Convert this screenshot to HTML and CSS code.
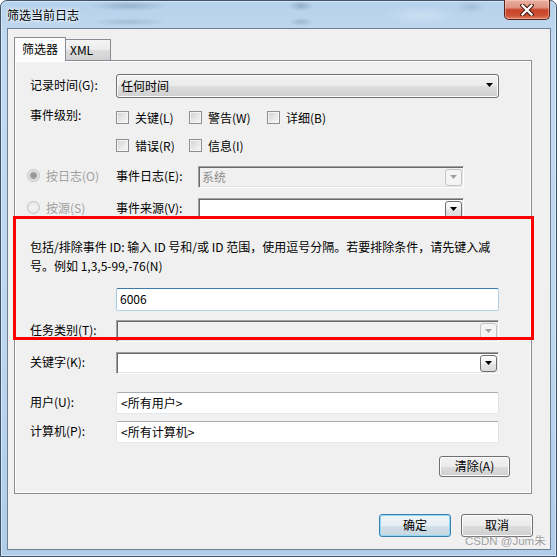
FILE: index.html
```html
<!DOCTYPE html>
<html lang="zh-CN">
<head>
<meta charset="utf-8">
<title>筛选当前日志</title>
<link rel="stylesheet" href="styles.css">
</head>
<body>
<div class="window">
  <div class="titlebar">
    <span class="title">筛选当前日志</span>
    <div class="close-btn">
      <svg width="14" height="12" viewBox="0 0 14 12"><path d="M2.5 1.5 L11.5 10.5 M11.5 1.5 L2.5 10.5" stroke="#4d1c12" stroke-width="4.4" stroke-linecap="square"/><path d="M2.5 1.5 L11.5 10.5 M11.5 1.5 L2.5 10.5" stroke="#ffffff" stroke-width="2.2" stroke-linecap="square"/></svg>
    </div>
  </div>
  <div class="client">
    <div class="tabs">
      <div class="tab tab-active">筛选器</div>
      <div class="tab">XML</div>
    </div>
    <div class="panel">
      <div class="field field-time">
        <span class="label">记录时间(G):</span>
        <div class="dropdown"><span>任何时间</span><svg class="tri" width="7" height="4" viewBox="0 0 7 4"><path d="M0 0h7L3.5 4z"/></svg></div>
      </div>
      <div class="field field-levels">
        <span class="label">事件级别:</span>
        <div class="checks">
          <span class="check"><span class="box"></span>关键(L)</span>
          <span class="check"><span class="box"></span>警告(W)</span>
          <span class="check"><span class="box"></span>详细(B)</span>
          <span class="check"><span class="box"></span>错误(R)</span>
          <span class="check"><span class="box"></span>信息(I)</span>
        </div>
      </div>
      <div class="source-row source-log">
        <span class="radio"><span class="dot dot-on"></span>按日志(O)</span>
        <span class="label">事件日志(E):</span>
        <div class="combo combo-off"><span>系统</span><span class="drop-btn"><svg class="tri" width="7" height="4" viewBox="0 0 7 4"><path d="M0 0h7L3.5 4z"/></svg></span></div>
      </div>
      <div class="source-row source-src">
        <span class="radio"><span class="dot"></span>按源(S)</span>
        <span class="label">事件来源(V):</span>
        <div class="combo"><span></span><span class="drop-btn"><svg class="tri" width="7" height="4" viewBox="0 0 7 4"><path d="M0 0h7L3.5 4z"/></svg></span></div>
      </div>
      <p class="desc">包括/排除事件 ID: 输入 ID 号和/或 ID 范围，使用逗号分隔。若要排除条件，请先键入减<br>号。例如 1,3,5-99,-76(N)</p>
      <div class="field field-id">
        <span class="label"></span>
        <div class="textbox textbox-focus">6006</div>
      </div>
      <div class="field field-task">
        <span class="label">任务类别(T):</span>
        <div class="combo combo-off"><span></span><span class="drop-btn"><svg class="tri" width="7" height="4" viewBox="0 0 7 4"><path d="M0 0h7L3.5 4z"/></svg></span></div>
      </div>
      <div class="field field-keyword">
        <span class="label">关键字(K):</span>
        <div class="combo"><span></span><span class="drop-btn"><svg class="tri" width="7" height="4" viewBox="0 0 7 4"><path d="M0 0h7L3.5 4z"/></svg></span></div>
      </div>
      <div class="field field-user">
        <span class="label">用户(U):</span>
        <div class="textbox">&lt;所有用户&gt;</div>
      </div>
      <div class="field field-computer">
        <span class="label">计算机(P):</span>
        <div class="textbox">&lt;所有计算机&gt;</div>
      </div>
      <div class="clear-row"><button class="btn btn-clear">清除(A)</button></div>
    </div>
    <div class="footer">
      <button class="btn btn-default">确定</button>
      <button class="btn">取消</button>
    </div>
  </div>
  <div class="annotation"></div>
  <div class="watermark">CSDN @Jum朱</div>
</div>
</body>
</html>
```
FILE: styles.css
```css
* { box-sizing: border-box; }
html, body { margin: 0; padding: 0; }
body {
  width: 557px; height: 557px; overflow: hidden; background: #fff;
  font-family: "Noto Sans CJK SC", "Noto Sans", sans-serif;
  font-size: 12px; line-height: 17px; color: #000;
}
.window {
  position: relative; width: 557px; height: 557px;
  display: flex; flex-direction: column;
  border: 1px solid #3f536b; border-radius: 7px 7px 0 0;
  background: linear-gradient(180deg, #b6d1eb 0%, #c2daf1 8%, #bdd7f0 60%, #b0cce8 100%);
  box-shadow: inset 0 0 0 1px rgba(255,255,255,.45);
}
.titlebar {
  flex: none; height: 27px;
  display: flex; justify-content: space-between; align-items: flex-start;
  border-radius: 6px 6px 0 0;
  background:
    radial-gradient(ellipse 38px 5px at 128px 5px, rgba(85,105,130,.30), transparent),
    radial-gradient(ellipse 38px 4px at 128px 21px, rgba(85,105,130,.22), transparent),
    radial-gradient(ellipse 12px 5px at 300px 5px, rgba(85,105,130,.35), transparent),
    radial-gradient(ellipse 12px 4px at 300px 21px, rgba(85,105,130,.28), transparent),
    radial-gradient(ellipse 14px 6px at 470px 6px, rgba(85,105,130,.18), transparent),
    radial-gradient(ellipse 40px 10px at 420px 14px, rgba(255,255,255,.25), transparent);
}
.title {
  padding: 5px 0 0 6px;
  text-shadow: 0 0 5px #fff, 0 0 3px #fff;
}
.close-btn {
  width: 46px; height: 20px; margin: -1px 6px 0 0;
  display: flex; align-items: center; justify-content: center;
  border: 1px solid #5a2016; border-top: none; border-radius: 0 0 5px 5px;
  background: linear-gradient(180deg, #eab0a2 0%, #df9281 40%, #c8452c 52%, #cc4f34 80%, #e0805c 100%);
  box-shadow: inset 0 0 0 1px rgba(255,220,210,.45);
}
.client {
  flex: none; height: 522px; margin: 0 5px 0 6px;
  border: 1px solid #6f7f92; background: #f0f0f0;
  padding: 8px 0 0 6px;
  display: flex; flex-direction: column;
}
.tabs {
  flex: none; height: 23px;
  display: flex; align-items: flex-end;
  position: relative; z-index: 1;
}
.tab {
  height: 21px; width: 45px;
  border: 1px solid #898c95; border-left: none; border-bottom: none;
  padding: 1px 0 0 4px;
  background: linear-gradient(180deg, #f4f4f4 0%, #ebebeb 50%, #dddddd 51%, #d2d2d2 100%);
}
.tab-active {
  height: 24px; width: 52px; margin-bottom: -1px;
  border-left: 1px solid #898c95;
  padding: 2px 0 0 0; text-align: center;
  background: #fcfcfc;
}
.panel {
  flex: none; width: 518px; height: 434px;
  border: 1px solid #898c95;
  box-shadow: inset 1px 1px 0 #fff, inset -1px -1px 0 #fff;
  background: #f0f0f0;
  padding: 13px 0 0 15px;
}
.field {
  display: grid; grid-template-columns: 86px 383px; align-items: center;
}
.label { margin-bottom: 4px; }
.field-time { height: 24px; }
.field-levels { margin-top: 11px; align-items: start; }
.field-levels .label { margin-top: -3px; margin-bottom: 0; }
.field-id { margin-top: 13px; }
.field-task { margin-top: 9px; }
.field-keyword { margin-top: 10px; }
.field-user { margin-top: 18px; }
.field-computer { margin-top: 7px; }

.dropdown {
  height: 24px; border: 1px solid #707070; border-radius: 3px;
  display: flex; align-items: center; justify-content: space-between;
  padding: 0 5px 2px 4px;
  background: linear-gradient(180deg, #f3f3f3 0%, #ebebeb 48%, #dddddd 52%, #cfcfcf 100%);
  box-shadow: inset 0 0 0 1px #fbfbfb;
}
.tri { display: block; fill: #000; }

.checks {
  display: grid; grid-template-columns: 73px 78px auto;
  grid-auto-rows: 17px; row-gap: 11px;
}
.check { display: flex; align-items: center; gap: 6px; }
.box {
  width: 13px; height: 13px; flex: none;
  border: 1px solid #8e8f8f;
  background: linear-gradient(135deg, #cdd1d6 0%, #eaeaea 60%, #f7f7f7 100%);
  box-shadow: inset 0 0 0 1px #f4f4f4;
}

.source-row {
  display: grid; grid-template-columns: 89px 82px 266px; align-items: center;
  margin-left: -3px;
}
.source-log { margin-top: 12px; }
.source-src { margin-top: 10px; }
.radio { display: flex; align-items: center; gap: 6px; color: #a0a0a0; margin-bottom: 3px; }
.dot {
  width: 13px; height: 13px; border-radius: 50%; flex: none;
  border: 1px solid #c0c0c0;
  background: radial-gradient(circle, #f4f4f4 0, #e4e4e4 100%);
}
.dot-on {
  background: radial-gradient(circle, #8f8f8f 0, #9a9a9a 2px, #b4b4b4 3.5px, #e9e9e9 4.5px, #eeeeee 100%);
}

.combo {
  height: 22px;
  display: flex; align-items: center; justify-content: space-between;
  border: 1px solid; border-color: #a0a0a0 #ffffff #ffffff #a0a0a0;
  box-shadow: inset 1px 1px 0 #696969, inset -1px -1px 0 #e3e3e3;
  background: #fff;
  padding: 0 1px 0 3px;
}
.combo > span:first-child { margin-bottom: 2px; }
.combo-off { background: #f0f0f0; color: #8d8d8d; }
.drop-btn {
  width: 17px; height: 17px;
  display: flex; align-items: center; justify-content: center;
  border: 1px solid #707070; border-radius: 3px;
  background: linear-gradient(180deg, #fdfdfd 0%, #f0f0f0 50%, #e4e4e4 51%, #dcdcdc 100%);
}
.combo-off .drop-btn { border-color: #c3c3c3; background: #f4f4f4; }
.combo-off .tri { fill: #a3a3a3; }

.desc { margin: 17px 0 0 0; line-height: 19px; white-space: nowrap; }

.textbox {
  height: 22px;
  display: flex; align-items: center;
  border: 1px solid; border-color: #abadb3 #e2e3ea #e3e9ef #e2e3ea;
  border-radius: 2px; background: #fff;
  padding: 0 0 2px 4px;
}
.textbox-focus {
  height: 23px; padding-left: 3px;
  border-color: #3d7bad #b5cfe7 #b7d5ea #a4c9e3;
}

.clear-row { display: flex; justify-content: flex-end; margin: 13px 21px 0 0; }
.btn {
  width: 72px; height: 23px; padding: 0 0 2px 0;
  font: inherit; color: #000;
  border: 1px solid #707070; border-radius: 3px;
  background: linear-gradient(180deg, #f2f2f2 0%, #ebebeb 50%, #dddddd 51%, #cfcfcf 100%);
  box-shadow: inset 0 0 0 1px #fcfcfc;
}
.btn-clear { width: 71px; height: 21px; }
.btn-default {
  border-color: #3c7fb1;
  background: linear-gradient(180deg, #eef5f9 0%, #e5eef3 50%, #d3e0e8 51%, #c6d5df 100%);
  box-shadow: inset 0 0 0 1px #8cdaf7;
}
.footer {
  flex: none; height: 55px;
  display: flex; justify-content: flex-end; align-items: flex-start; gap: 10px;
  padding: 20px 17px 0 0;
}
.annotation {
  position: absolute; left: 12px; top: 215px;
  width: 521px; height: 124px;
  border: 3px solid #ff0000;
  pointer-events: none;
}
.watermark {
  position: absolute; left: 464px; top: 532px;
  font-family: "Liberation Sans", "Noto Sans CJK SC", sans-serif;
  font-size: 11.5px; line-height: 17px;
  color: rgba(135,135,135,.8);
  text-shadow: 0 0 2px rgba(255,255,255,.8);
}
```
